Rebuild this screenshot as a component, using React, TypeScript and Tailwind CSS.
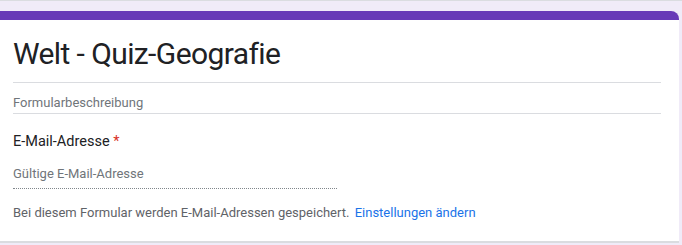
export default function App() {
  return (
    <div className="w-[682px] h-[245px] overflow-hidden bg-[#f0ebf8] border-t border-[#dadce0] pt-[10px] font-['Roboto',sans-serif]">
      <div className="mr-[3px] h-[232px] bg-white rounded-tr-lg border-t-[9px] border-[#673ab7] border-b-2 border-b-[#dadce0]">
        <div className="pl-[13px] pr-[18px]">
          {/* Titel */}
          <div className="h-[63px] border-b border-[#dadce0] flex items-end pb-[13px]">
            <h1 className="text-[30px] leading-none tracking-[-0.6px] text-[#202124]">Welt - Quiz-Geografie</h1>
          </div>
          <div className="h-[31px] border-b border-[#dadce0] flex items-end pb-[4px]">
            <p className="text-[13px] leading-none text-[#70757a]">Formularbeschreibung</p>
          </div>
        </div>

        {/* E-Mail Feld */}
        <div className="pl-[13px] pt-[21px]">
          <div className="text-[14.5px] leading-none text-[#202124]">
            E-Mail-Adresse <span className="text-[#d93025]">*</span>
          </div>
          <div className="mt-[11px] w-[324px] border-b border-dotted border-[#80868b] pb-[3px]">
            <span className="text-[13px] leading-none text-[#70757a]">Gültige E-Mail-Adresse</span>
          </div>
          <p className="mt-[17px] text-[13px] leading-none text-[#5f6368]">
            Bei diesem Formular werden E-Mail-Adressen gespeichert.{' '}
            <a href="#" className="ml-[2px] text-[#1a73e8]">Einstellungen ändern</a>
          </p>
        </div>
      </div>
    </div>
  );
}
